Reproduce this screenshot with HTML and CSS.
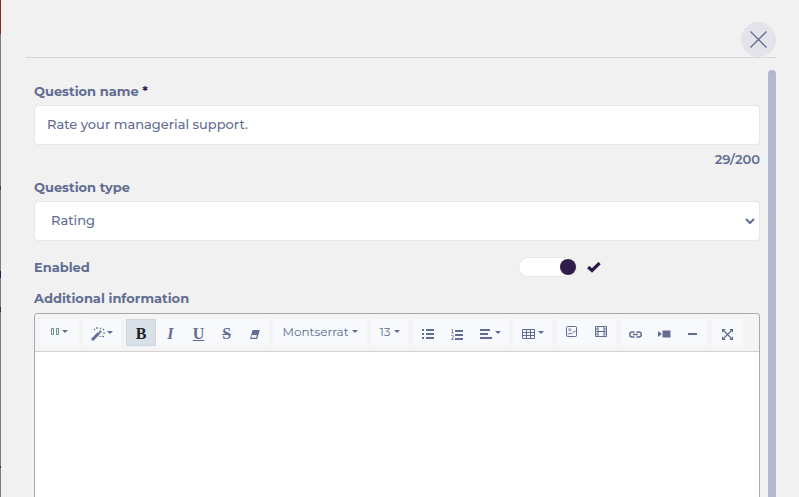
FILE: index.html
```html
<!DOCTYPE html>
<html lang="en">
<head>
<meta charset="utf-8">
<meta name="viewport" content="width=device-width, initial-scale=1">
<title>Question</title>
<link rel="stylesheet" href="styles.css">
</head>
<body>
<div class="backdrop"></div>
<main class="panel">
  <header class="panel-head">
    <button class="close" type="button" aria-label="Close">
      <svg width="17" height="17" viewBox="0 0 17 17"><path d="M.5 .5L16.5 16.5M16.5 .5L.5 16.5" fill="none" stroke="currentColor" stroke-width="1.3"/></svg>
    </button>
  </header>
  <div class="scroller">
    <form class="form">
      <div class="field">
        <label for="name">Question name <span class="required">*</span></label>
        <input class="control" id="name" type="text" value="Rate your managerial support.">
        <output class="counter" for="name">29/200</output>
      </div>
      <div class="field">
        <label for="type">Question type</label>
        <div class="select-wrap">
          <select class="control select" id="type"><option>Rating</option></select>
          <svg class="chevron" width="10" height="6" viewBox="0 0 10 6"><path d="M1 1L5 5L9 1" fill="none" stroke="currentColor" stroke-width="2"/></svg>
        </div>
      </div>
      <div class="toggle-row">
        <label for="enabled">Enabled</label>
        <div class="toggle-cell">
          <input class="switch" id="enabled" type="checkbox" role="switch" checked>
          <svg width="14" height="11" viewBox="0 0 14 11"><path d="M1.2 5L5 8.5L12.6 1" fill="none" stroke="currentColor" stroke-width="3.2"/></svg>
        </div>
      </div>
      <label class="editor-label" for="info">Additional information</label>
      <div class="editor">
        <div class="toolbar" role="toolbar" aria-label="Formatting">
          <div class="group drop">
            <button class="raised" type="button" aria-label="Variables"><svg width="8" height="8" viewBox="0 0 8 8"><path d="M.5 .5H2.5V6.5H.5ZM5.5 .5H7.5V6.5H5.5Z" fill="none" stroke="#6a9180"/></svg><i class="caret"></i></button>
          </div>
          <div class="group drop">
            <button class="magic" type="button" aria-label="Style"><svg width="15" height="14" viewBox="0 0 15 14"><path d="M1 13L8 6" stroke="currentColor" stroke-width="3"/><path d="M8.3 5.7L10 4" stroke="currentColor" stroke-width="2"/><path d="M6 0V2M3 2L4 3M10 1L9 2M12 3L13 2M12 6H14M11 9L13 10M9 9V10" stroke="currentColor" stroke-width="1.2"/></svg><i class="caret"></i></button>
          </div>
          <div class="group text-group">
            <button class="glyph active" type="button" aria-label="Bold"><b>B</b></button>
            <button class="glyph" type="button" aria-label="Italic"><em>I</em></button>
            <button class="glyph" type="button" aria-label="Underline"><u>U</u></button>
            <button class="glyph" type="button" aria-label="Strikethrough"><s>S</s></button>
            <button type="button" aria-label="Clear formatting"><svg width="10" height="9" viewBox="0 0 10 9"><path d="M2.6 0H9.8L7.2 9H0Z" fill="currentColor"/><path d="M1.9 5H6.9L6.2 7.8H1.1Z" fill="#f7f9fc"/></svg></button>
          </div>
          <div class="group font-group">
            <button class="raised" type="button">Montserrat<i class="caret"></i></button>
          </div>
          <div class="group size-group">
            <button class="raised" type="button">13<i class="caret"></i></button>
          </div>
          <div class="group para-group">
            <button type="button" aria-label="Unordered list"><svg width="12" height="10" viewBox="0 0 12 10"><path d="M0 1H2M0 5H2M0 9H2M4 1H12M4 5H12M4 9H12" stroke="currentColor" stroke-width="2"/></svg></button>
            <button type="button" aria-label="Ordered list"><svg width="12" height="11" viewBox="0 0 12 11"><path d="M4 2H12M4 6H12M4 10H12" stroke="currentColor" stroke-width="2"/><path d="M.5 .5H1.5V4M.3 4H2.7M.3 6.5H2.3V8L.5 10.5H2.8" fill="none" stroke="currentColor" stroke-width=".8"/></svg></button>
            <button type="button" aria-label="Paragraph"><svg width="12" height="10" viewBox="0 0 12 10"><path d="M0 1H10M0 5H8M0 9H12" stroke="currentColor" stroke-width="2"/></svg><i class="caret"></i></button>
          </div>
          <div class="group drop">
            <button type="button" aria-label="Table"><svg width="13" height="10" viewBox="0 0 13 10"><path d="M.5 .5H12.5V9.5H.5ZM.5 3.5H12.5M.5 6.5H12.5M4.5 .5V9.5M8.5 .5V9.5" fill="none" stroke="currentColor"/></svg><i class="caret"></i></button>
          </div>
          <div class="group media-group">
            <button class="raised" type="button" aria-label="Image"><svg width="11" height="11" viewBox="0 0 11 11"><rect x=".5" y=".5" width="10" height="10" rx="1" fill="none" stroke="currentColor"/><circle cx="3.7" cy="3.7" r="1.1" fill="none" stroke="currentColor" stroke-width=".8"/><path d="M1.5 9L4 7L5.5 8L8.5 5L10 6.5" fill="none" stroke="currentColor" stroke-width=".9"/></svg></button>
            <button class="raised" type="button" aria-label="Film"><svg width="12" height="11" viewBox="0 0 12 11"><path d="M.5 .5H11.5V10.5H.5ZM3 .5V10.5M9 .5V10.5M3 5.5H9M.5 3H3M.5 5.5H3M.5 8H3M9 3H11.5M9 5.5H11.5M9 8H11.5" fill="none" stroke="currentColor"/></svg></button>
          </div>
          <div class="group insert-group">
            <button type="button" aria-label="Link"><svg width="13" height="7" viewBox="0 0 13 7"><path d="M5.5 1H3.2A2.5 2.5 0 0 0 3.2 6H5.5M7.5 1H9.8A2.5 2.5 0 0 1 9.8 6H7.5M4 3.5H9" fill="none" stroke="currentColor" stroke-width="1.4"/></svg></button>
            <button type="button" aria-label="Video"><svg width="13" height="8" viewBox="0 0 13 8"><path d="M4.5 .5H12.5V7.5H4.5ZM0 1L4 4L0 7Z" fill="currentColor"/></svg></button>
            <button type="button" aria-label="Horizontal rule"><svg width="9" height="8" viewBox="0 0 9 8"><path d="M0 4H9" stroke="currentColor" stroke-width="2"/></svg></button>
          </div>
          <div class="group full-group">
            <button type="button" aria-label="Full screen"><svg width="11" height="11" viewBox="0 0 11 11"><path d="M1 1L10 10M10 1L1 10" stroke="currentColor" stroke-width="1.2"/><path d="M0 0H3.8L0 3.8ZM11 0V3.8L7.2 0ZM0 11V7.2L3.8 11ZM11 11H7.2L11 7.2Z" fill="currentColor"/></svg></button>
          </div>
        </div>
        <textarea class="editor-area" id="info"></textarea>
      </div>
    </form>
    <div class="thumb"></div>
  </div>
</main>
</body>
</html>
```
FILE: styles.css
```css
* { box-sizing: border-box; }

body {
  margin: 0;
  height: 100vh;
  display: flex;
  overflow: hidden;
  background: #f1f1f1;
  color: #626d92;
  font-family: Montserrat, Inter, sans-serif;
  font-size: 13px;
  font-weight: 500;
  line-height: 16px;
}

svg { display: block; flex: none; }

button, input, select, textarea { font: inherit; color: inherit; margin: 0; }

.backdrop {
  width: 1px;
  flex: none;
  background: linear-gradient(#8b2a20 34px, #7d7d7d 34px 186px, #4d4038 186px 190px, #7d7d7d 190px 271px, #2c1a4a 271px 278px, #7d7d7d 278px 307px, #35304d 307px 312px, #7d7d7d 312px 466px, #35304d 466px 468px, #7d7d7d 468px);
}

.panel {
  flex: 1;
  min-width: 0;
  display: flex;
  flex-direction: column;
  padding: 22px 23px 0 25px;
}

.panel-head {
  display: flex;
  justify-content: flex-end;
  border-bottom: 1px solid #d8d8d8;
}

.close {
  width: 35px;
  height: 35px;
  padding: 0;
  border: 0;
  border-radius: 50%;
  background: #e4e3ea;
  display: grid;
  place-items: center;
}

.scroller {
  flex: 1;
  min-height: 0;
  display: flex;
  gap: 8px;
  padding: 12px 0 0 8px;
}

.thumb {
  width: 8px;
  flex: none;
  border-radius: 4px 4px 0 0;
  background: #b3b8d0;
}

.form {
  flex: 1;
  min-width: 0;
  display: flex;
  flex-direction: column;
  padding-top: 13px;
}

label { font-weight: 700; }

.required { color: #2c1a4a; }

.field {
  display: flex;
  flex-direction: column;
  gap: 6px;
  margin-bottom: 12px;
}

.control {
  width: 100%;
  height: 40px;
  padding: 0 12px 2px;
  border: 1px solid #e6e6e6;
  border-radius: 4px;
  background: #fff;
}

.counter {
  align-self: flex-end;
  font-weight: 600;
}

.select-wrap { position: relative; }

.select { appearance: none; padding: 0 16px 2px; }

.chevron {
  position: absolute;
  right: 5px;
  top: 17px;
  pointer-events: none;
}

.toggle-row {
  display: grid;
  grid-template-columns: 2fr 1fr;
  align-items: center;
  margin: 4px 0 13px;
}

.toggle-cell {
  display: flex;
  align-items: center;
  gap: 10px;
  color: #2c1a4a;
}

.switch {
  appearance: none;
  width: 59px;
  height: 20px;
  padding: 1px 0;
  border: 1px solid #e6e6e6;
  border-radius: 10px;
  background: #fff;
  display: flex;
}

.switch::before {
  content: "";
  width: 16px;
  height: 16px;
  border-radius: 50%;
  background: #2f1c4b;
}

.switch:checked { justify-content: flex-end; }

.editor-label { margin-bottom: 7px; }

.editor {
  flex: 1;
  min-height: 0;
  display: flex;
  flex-direction: column;
  border: 1px solid #a9a9ab;
  border-bottom: 0;
  border-radius: 4px 4px 0 0;
  background: #fff;
  overflow: hidden;
}

.toolbar {
  display: flex;
  flex-wrap: wrap;
  gap: 5px;
  padding: 5px;
  border-bottom: 1px solid #d3d3d3;
  background: #f4f4f4;
}

.group {
  display: flex;
  height: 27px;
  background: #f7f9fc;
}

.group button {
  flex: 1;
  min-width: 0;
  padding: 3px 0 0;
  border: 0;
  background: transparent;
  display: flex;
  align-items: center;
  justify-content: center;
  gap: 3px;
  font-size: 12px;
  font-weight: 400;
}

.group .raised { padding: 0 0 2px; }

.drop { width: 38px; }
.text-group { width: 143px; }
.font-group { width: 92px; }
.size-group { width: 37px; }
.para-group { width: 96px; }
.para-group button:last-child { flex: 0 0 38px; }
.media-group { width: 59px; }
.insert-group { width: 86px; }
.full-group { width: 30px; }

.group .magic { gap: 1px; }

.group .glyph {
  font-family: "Liberation Serif", serif;
  font-size: 16px;
  font-weight: 700;
}

.group .active {
  background: #dae0e8;
  border: 1px solid #d0d6df;
  color: #1d1d26;
}

.caret {
  border: 3px solid transparent;
  border-top-color: currentColor;
  border-bottom: 0;
}

.group button:not(.raised) .caret { margin-bottom: 4px; }

.editor-area {
  flex: 1;
  border: 0;
  padding: 10px;
  resize: none;
  background: #fff;
}
```
